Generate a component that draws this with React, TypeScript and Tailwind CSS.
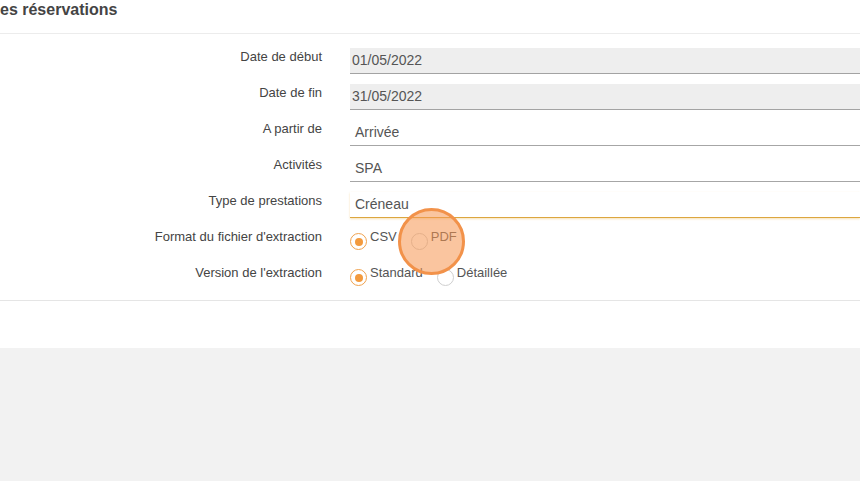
import React from 'react';

const fields = [
  { label: 'Date de début', value: '01/05/2022', disabled: true },
  { label: 'Date de fin', value: '31/05/2022', disabled: true },
  { label: 'A partir de', value: 'Arrivée' },
  { label: 'Activités', value: 'SPA' },
  { label: 'Type de prestations', value: 'Créneau', focused: true },
];

function Radio({ checked, label }: { checked?: boolean; label: string }) {
  return (
    <div className="flex items-start mr-[14px]">
      <span
        className={`mt-[5px] w-[17px] h-[17px] rounded-full border flex items-center justify-center bg-white ${
          checked ? 'border-[#f0a24e]' : 'border-[#cfcfcf]'
        }`}
      >
        {checked && <span className="w-[8px] h-[8px] rounded-full bg-[#f39a3d]" />}
      </span>
      <span className="ml-[3px] text-[13px] leading-[18px] text-[#555]">{label}</span>
    </div>
  );
}

export default function App() {
  return (
    <div className="w-[860px] h-[481px] bg-[#f2f2f2] flex flex-col overflow-hidden relative" style={{ fontFamily: '"Liberation Sans", Arial, sans-serif' }}>
      <div className="h-[348px] bg-white flex flex-col">
        <div className="h-[34px] border-b border-[#ececec]">
          <h1 className="text-[16px] font-bold text-[#444] leading-[20px]">es réservations</h1>
        </div>

        <div className="pt-[14px] pb-[10px] border-b border-[#e5e5e5] flex flex-col gap-[10px]">
          {fields.map((f) => (
            <div key={f.label} className="flex h-[26px]">
              <div className="w-[322px] text-right text-[13px] leading-[17px] text-[#444]">{f.label}</div>
              <div
                className={`ml-[28px] flex-1 h-[26px] flex items-center text-[14px] border-b ${
                  f.disabled
                    ? 'bg-[#eeeeee] border-[#a3a3a3] pl-[2px] text-[#555]'
                    : f.focused
                    ? 'bg-white border-[#dca63f] shadow-[0_1px_2px_rgba(240,190,90,0.45)] pl-[5px] text-[#555]'
                    : 'bg-white border-[#a6a6a6] pl-[5px] text-[#555]'
                }`}
              >
                {f.value}
              </div>
            </div>
          ))}

          <div className="flex h-[26px]">
            <div className="w-[322px] text-right text-[13px] leading-[17px] text-[#444]">Format du fichier d'extraction</div>
            <div className="ml-[28px] flex-1 flex">
              <Radio checked label="CSV" />
              <Radio label="PDF" />
            </div>
          </div>

          <div className="flex h-[26px]">
            <div className="w-[322px] text-right text-[13px] leading-[17px] text-[#444]">Version de l'extraction</div>
            <div className="ml-[28px] flex-1 flex">
              <Radio checked label="Standard" />
              <Radio label="Détaillée" />
            </div>
          </div>
        </div>
      </div>

      {/* click highlight */}
      <div className="absolute left-[398px] top-[208px] w-[67px] h-[67px] rounded-full border-[3px] border-[#f2924a] bg-[rgba(245,150,80,0.55)] pointer-events-none" />
    </div>
  );
}
